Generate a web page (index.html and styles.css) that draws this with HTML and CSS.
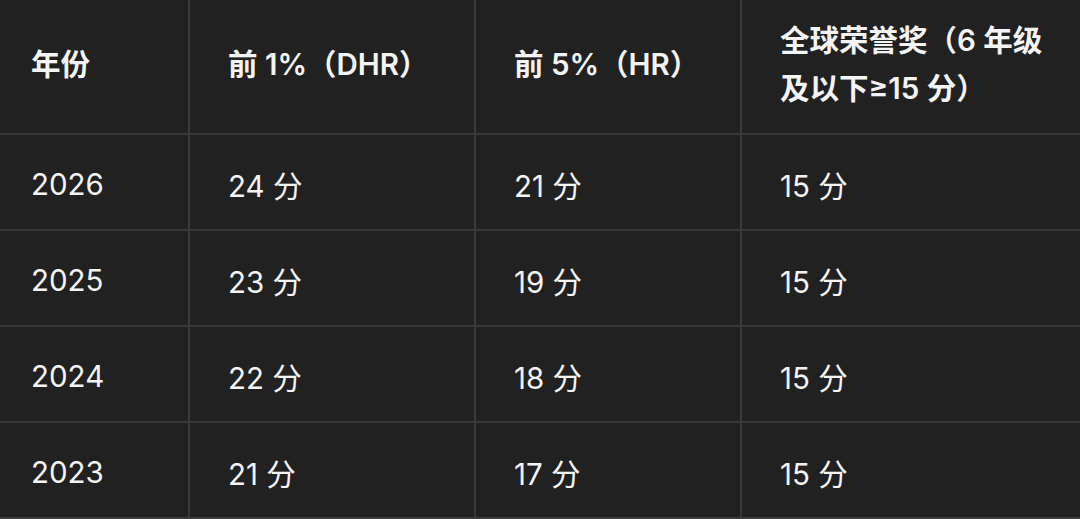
FILE: index.html
```html
<!DOCTYPE html>
<html lang="zh-CN">
<head>
<meta charset="utf-8">
<link rel="stylesheet" href="styles.css">
</head>
<body>
<table class="scores">
  <colgroup>
    <col class="c1"><col class="c2"><col class="c3"><col class="c4">
  </colgroup>
  <thead>
    <tr>
      <th>年份</th>
      <th>前 1%（DHR）</th>
      <th>前 5%（HR）</th>
      <th>全球荣誉奖（6 年级及以下≥15 分）</th>
    </tr>
  </thead>
  <tbody>
    <tr><td>2026</td><td>24 分</td><td>21 分</td><td>15 分</td></tr>
    <tr><td>2025</td><td>23 分</td><td>19 分</td><td>15 分</td></tr>
    <tr><td>2024</td><td>22 分</td><td>18 分</td><td>15 分</td></tr>
    <tr><td>2023</td><td>21 分</td><td>17 分</td><td>15 分</td></tr>
    <tr class="more" aria-hidden="true"><td></td><td></td><td></td><td></td></tr>
  </tbody>
</table>
</body>
</html>
```

FILE: styles.css
```css
html, body {
  margin: 0;
  padding: 0;
  background: #212121;
  overflow: hidden;
  height: 519px;
}
.scores {
  border-collapse: collapse;
  table-layout: fixed;
  width: 1112px;
  margin-left: -9px;
  color: #f4f4f4;
  font-family: "Inter", "Noto Sans CJK SC", sans-serif;
  font-size: 29.5px;
}
.c1 { width: 197px; }
.c2 { width: 286px; }
.c3 { width: 266px; }
.c4 { width: 363px; }
.scores th, .scores td {
  border: 2px solid #3a3a3a;
  text-align: left;
  padding: 0 37px 0 38px;
  vertical-align: middle;
}
.scores th {
  font-weight: 600;
  line-height: 48px;
  height: 128px;
  border-top: none;
  padding-bottom: 5px;
}
.scores td {
  font-weight: 400;
  height: 91px;
  padding-top: 3px;
}
```
